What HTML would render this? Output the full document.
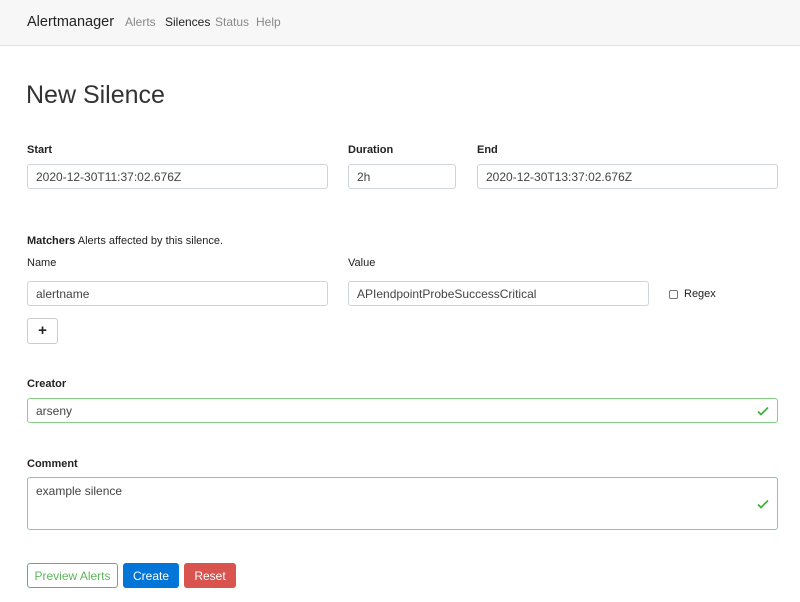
<!DOCTYPE html>
<html><head><style>
*{box-sizing:border-box;margin:0;padding:0}
body{width:800px;height:602px;background:#fff;position:relative;font-family:"Liberation Sans",sans-serif;color:#222;overflow:hidden}
.a{position:absolute;white-space:nowrap}
.nav{position:absolute;left:0;top:0;width:800px;height:46px;background:#f7f7f7;border-bottom:1px solid #e0e0e0}
.lbl{font-size:11px;font-weight:bold;color:#222}
.inp{position:absolute;border:1px solid #ced4da;border-radius:3px;font-family:"Liberation Sans",sans-serif;font-size:12px;color:#444;padding-left:8px;display:flex;align-items:center;height:25px}
.btn{position:absolute;top:563px;height:25px;border-radius:3px;font-family:"Liberation Sans",sans-serif;font-size:12px;display:flex;align-items:center;justify-content:center}
.chk{position:absolute;right:8px;top:50%;margin-top:-6px}
</style></head><body>
<div class="nav"></div>
<div class="a" style="left:27px;top:14px;font-size:14.5px;color:#222">Alertmanager</div>
<div class="a" style="left:125px;top:15px;font-size:12px;color:#888">Alerts</div>
<div class="a" style="left:165px;top:15px;font-size:12px;color:#222">Silences</div>
<div class="a" style="left:215px;top:15px;font-size:12px;color:#888">Status</div>
<div class="a" style="left:256px;top:15px;font-size:12px;color:#888">Help</div>
<div class="a" style="left:26px;top:81px;font-size:25px;font-weight:300;color:#333">New Silence</div>

<div class="a lbl" style="left:27px;top:144px">Start</div>
<div class="a lbl" style="left:348px;top:144px">Duration</div>
<div class="a lbl" style="left:477px;top:144px">End</div>
<div class="inp" style="left:27px;top:164px;width:301px">2020-12-30T11:37:02.676Z</div>
<div class="inp" style="left:348px;top:164px;width:108px">2h</div>
<div class="inp" style="left:477px;top:164px;width:301px">2020-12-30T13:37:02.676Z</div>

<div class="a" style="left:27px;top:235px;font-size:11px"><b>Matchers</b> Alerts affected by this silence.</div>
<div class="a" style="left:27px;top:257px;font-size:11px">Name</div>
<div class="a" style="left:348px;top:257px;font-size:11px">Value</div>
<div class="inp" style="left:27px;top:281px;width:301px">alertname</div>
<div class="inp" style="left:348px;top:281px;width:301px">APIendpointProbeSuccessCritical</div>
<div class="a" style="left:669px;top:290px;width:9px;height:9px;border:1px solid #777;border-radius:2px"></div>
<div class="a" style="left:684px;top:288px;font-size:11px">Regex</div>
<div class="a" style="left:27px;top:318px;width:31px;height:26px;border:1px solid #ccc;border-radius:3px;font-size:15px;font-weight:bold;text-align:center;line-height:23px">+</div>

<div class="a lbl" style="left:27px;top:378px">Creator</div>
<div class="inp" style="left:27px;top:398px;width:751px;border:1px solid #85cf85">arseny<svg class="chk" width="12" height="12" viewBox="0 0 12 12"><path d="M1 6.5l3 3 7-7" stroke="#3fb03f" stroke-width="1.8" fill="none"/></svg></div>
<div class="a lbl" style="left:27px;top:458px">Comment</div>
<div class="inp" style="left:27px;top:477px;width:751px;height:53px;align-items:flex-start;padding-top:6px;border:1px solid #85cf85">example silence<svg class="chk" width="12" height="12" viewBox="0 0 12 12"><path d="M1 6.5l3 3 7-7" stroke="#3fb03f" stroke-width="1.8" fill="none"/></svg></div>

<div class="btn" style="left:27px;width:91px;border:1px solid #5cb85c;color:#5cb85c">Preview Alerts</div>
<div class="btn" style="left:123px;width:56px;background:#0275d8;color:#fff">Create</div>
<div class="btn" style="left:184px;width:52px;background:#d9534f;color:#fff">Reset</div>
</body></html>
